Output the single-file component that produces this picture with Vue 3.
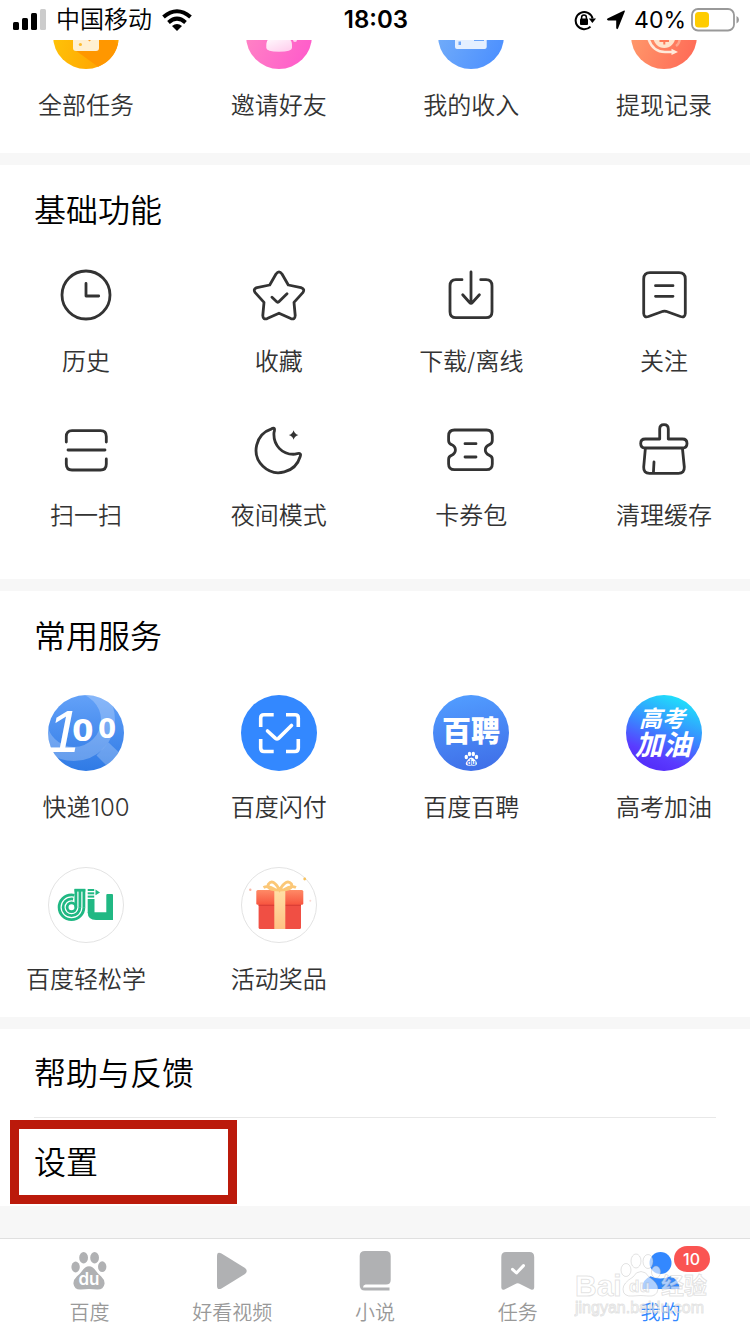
<script setup>
import { ref } from 'vue'

// Coin task shortcuts
const tasks = [
  { id: 'all', name: '全部任务' },
  { id: 'invite', name: '邀请好友' },
  { id: 'income', name: '我的收入' },
  { id: 'withdraw', name: '提现记录' }
]

// Line icons, 60x60
const basics = [
  {
    name: '历史',
    path: 'M30 6a24 24 0 1 0 0 48a24 24 0 1 0 0-48z M30 18.5V31H42.7'
  },
  {
    name: '收藏',
    path: 'M27 9Q30 4.8 33 9L39.3 20L52 22.6Q56.3 24 53.8 27.6L45 37.4L46.2 50.5Q46 55 41.8 53.6L30 48.2L18.2 53.6Q14 55 13.8 50.5L15 37.4L6.2 27.6Q3.7 24 8 22.6L20.7 20Z M23 32.3L28 37Q28.8 37.6 29.6 37L38 28.7'
  },
  {
    name: '下载/离线',
    path: 'M21 14.7H15Q9 14.7 9 21V46.7Q9 52.7 15 52.7H45Q51 52.7 51 46.7V21Q51 14.7 45 14.7H39.7 M30 7V38 M21.7 29.7L28.6 37.5Q30 39 31.4 37.5L38.4 29.7'
  },
  {
    name: '关注',
    path: 'M16 7.7H45Q51.3 7.7 51.3 14V48.5Q51 53 46.5 51.5L32 46.3Q30.5 45.8 29 46.3L14.5 51.5Q10 53 9.7 48.5V14Q9.7 7.7 16 7.7Z M21.5 20.7H39 M21.5 31.3H39'
  },
  {
    name: '扫一扫',
    path: 'M10.3 23V17.5Q10.3 11.7 16 11.7H44.5Q50.3 11.7 50.3 17.5V23 M12 31H49 M10.3 40V45Q10.3 51 16 51H44.5Q50.3 51 50.3 45V40'
  },
  {
    name: '夜间模式',
    path: 'M22.6 9.8C25.4 8 26.2 9.600 25 13.5C24 26 33 36 46 35.2C50.5 34 52.4 34 51.2 37.5A22.5 22.5 0 1 1 22.6 9.8Z',
    fill: 'M44.6 11.2Q45.6 15 49.4 16Q45.6 17 44.6 20.8Q43.6 17 39.8 16Q43.6 15 44.6 11.2Z'
  },
  {
    name: '卡券包',
    path: 'M13.5 11H45.5Q51.3 11 51.3 17V21.5Q51.3 24.5 48.5 25.6Q44.3 27.5 44.3 31Q44.3 34.5 48.5 36.4Q51.3 37.5 51.3 40.5V45Q51.3 50.7 45.5 50.7H13.5Q7.6 50.7 7.6 45V40.5Q7.6 37.5 10.4 36.4Q14.4 34.5 14.4 31Q14.4 27.5 10.4 25.6Q7.6 24.5 7.6 21.5V17Q7.6 11 13.5 11Z M24 24.7H35 M24 38H35'
  },
  {
    name: '清理缓存',
    path: 'M25.7 20V10Q25.7 5.7 30 5.7Q34.3 5.7 34.3 10V20H48.5Q53 20 53 24.5Q53 29 48.5 29H11.2Q6.7 29 6.7 24.5Q6.7 20 11.2 20Z M11.4 29L9.7 48Q9.4 54.3 15.5 54.3H44.5Q50.6 54.3 50.3 48L48.4 29 M20 43L19.4 54'
  }
]

const services = [
  { id: 'express', name: '快递100' },
  { id: 'pay', name: '百度闪付' },
  { id: 'job', name: '百度百聘' },
  { id: 'exam', name: '高考加油' },
  { id: 'study', name: '百度轻松学' },
  { id: 'gift', name: '活动奖品' }
]

const tabs = [
  { id: 'home', name: '百度' },
  { id: 'video', name: '好看视频' },
  { id: 'novel', name: '小说' },
  { id: 'task', name: '任务' },
  { id: 'mine', name: '我的', badge: 10 }
]

const activeTab = ref('mine')
</script>

<template>
  <div class="page">
    <header class="status-bar">
      <div class="status-left">
        <svg width="33" height="22" viewBox="0 0 33 22">
          <rect x="0" y="13" width="6" height="8" rx="1.5" />
          <rect x="9" y="9" width="6" height="12" rx="1.5" />
          <rect x="18" y="4" width="6" height="17" rx="1.5" />
          <rect x="27" y="0" width="6" height="21" rx="1.5" fill="#ccc" />
        </svg>
        <span>中国移动</span>
        <svg width="30" height="22" viewBox="0 0 30 22">
          <g fill="none" stroke="#000" stroke-width="4">
            <path d="M1.5 8Q15-3.5 28.5 8" />
            <path d="M6.5 13.4Q15 6 23.5 13.4" />
          </g>
          <path d="M10 17Q15 13 20 17L15 22Z" />
        </svg>
      </div>
      <time class="clock">18:03</time>
      <div class="status-right">
        <svg width="22" height="22" viewBox="0 0 22 22">
          <path d="M16.5 17.6A8.6 8.6 0 1 1 18.6 9.5" fill="none" stroke="#000" stroke-width="2" />
          <path d="M14.8 9.5H22L18.4 14Z" />
          <rect x="6" y="9.5" width="8" height="6.5" rx="1" />
          <path d="M7.6 10V8.4Q7.6 6 10 6Q12.4 6 12.4 8.4V10" fill="none" stroke="#000" stroke-width="1.5" />
        </svg>
        <svg class="locate" width="20" height="20" viewBox="0 0 20 20">
          <path d="M18.8 1.5L12 18.5Q10.8 20 10.2 18V10.500H2Q0 9.700 1.500 8.500L17.6 0.700Q19.300 0.200 18.8 1.5Z" />
        </svg>
        <span class="percent">40%</span>
        <svg class="battery" width="48" height="24" viewBox="0 0 48 24">
          <rect x="1" y="1" width="42" height="21.5" rx="6" fill="none" stroke="#999" stroke-width="1.8" />
          <rect x="4" y="4" width="14" height="15.5" rx="3.5" fill="#fc0" />
          <path d="M45.5 8Q48 9 48 11.7Q48 14.5 45.5 15.5Z" fill="#999" />
        </svg>
      </div>
    </header>

    <main>
      <section class="panel tasks">
        <div class="grid">
          <button v-for="t in tasks" :key="t.id" class="item">
            <svg v-if="t.id === 'all'" class="icon-task" viewBox="0 0 66 66">
              <defs>
                <linearGradient id="gOrange" x1="0" y1="0" x2="1" y2="0.3">
                  <stop offset="0" stop-color="#ffc80a" />
                  <stop offset="1" stop-color="#ffa200" />
                </linearGradient>
              </defs>
              <circle cx="33" cy="33" r="33" fill="url(#gOrange)" />
              <path d="M22 47L45 63.7A33 33 0 0 0 65 41L46 22Z" fill="#ff9700" />
              <rect x="20" y="16" width="26" height="32" rx="3" fill="#fff0d2" />
              <circle cx="27.4" cy="41.5" r="1.6" fill="#fdbb2d" />
              <path d="M35 37H38L36.5 38.5Z" fill="#fd9c20" />
            </svg>
            <svg v-else-if="t.id === 'invite'" class="icon-task" viewBox="0 0 66 66">
              <defs>
                <linearGradient id="gPink" x1="0" y1="0.3" x2="1" y2="0.8">
                  <stop offset="0" stop-color="#ff86c4" />
                  <stop offset="1" stop-color="#ff5acb" />
                </linearGradient>
                <linearGradient id="gPinkBody" x1="0" y1="0" x2="0.6" y2="1">
                  <stop offset="0" stop-color="#fff" />
                  <stop offset="1" stop-color="#ffd3ef" />
                </linearGradient>
              </defs>
              <circle cx="33" cy="33" r="33" fill="url(#gPink)" />
              <path d="M20.3 42Q20.3 33 33 33Q46 33 46 42V45Q46 48.7 33 48.7Q20.3 48.7 20.3 45Z" fill="url(#gPinkBody)" />
              <circle cx="49" cy="37" r="2" fill="#ffd3ef" />
            </svg>
            <svg v-else-if="t.id === 'income'" class="icon-task" viewBox="0 0 66 66">
              <defs>
                <linearGradient id="gSky" x1="0" y1="0.3" x2="1" y2="0.8">
                  <stop offset="0" stop-color="#74aef9" />
                  <stop offset="1" stop-color="#4b8fff" />
                </linearGradient>
              </defs>
              <circle cx="33" cy="33" r="33" fill="url(#gSky)" />
              <path d="M17 20H46V37H48.7V44Q48.7 46 46.5 46H19Q17 46 17 44Z" fill="#e4efff" />
              <path d="M20.5 38.5H23V42H20.5Z M36 37H46V38H36Z" fill="#6ba5fb" />
            </svg>
            <svg v-else class="icon-task" viewBox="0 0 66 66">
              <defs>
                <linearGradient id="gCoral" x1="0" y1="0.3" x2="1" y2="0.7">
                  <stop offset="0" stop-color="#ff9c6c" />
                  <stop offset="1" stop-color="#ff6b57" />
                </linearGradient>
              </defs>
              <circle cx="33" cy="33" r="33" fill="url(#gCoral)" />
              <circle cx="33.3" cy="34" r="11" fill="#ffe3cb" />
              <path d="M28.5 38H38M33.3 30V41.5" fill="none" stroke="#ff7a58" stroke-width="2" />
              <path d="M17.5 36Q22 49 34 49H41" fill="none" stroke="#ffe9da" stroke-width="2.4" />
              <path d="M40.5 45.8L47 49L40.5 52Z" fill="#ffe9da" />
              <path d="M49 36Q48 41 45 43" fill="none" stroke="#ffa68c" stroke-width="2.4" />
            </svg>
            <span class="label">{{ t.name }}</span>
          </button>
        </div>
      </section>

      <section class="panel basics">
        <h2>基础功能</h2>
        <div class="grid">
          <button v-for="b in basics" :key="b.name" class="item">
            <svg class="icon-line" viewBox="0 0 60 60">
              <path :d="b.path" />
              <path v-if="b.fill" class="solid" :d="b.fill" />
            </svg>
            <span class="label">{{ b.name }}</span>
          </button>
        </div>
      </section>

      <section class="panel services">
        <h2>常用服务</h2>
        <div class="grid">
          <button v-for="s in services" :key="s.id" class="item">
            <svg v-if="s.id === 'express'" class="icon-service" viewBox="0 0 76 76">
              <defs>
                <linearGradient id="gExpress" x1="0" y1="0" x2="0" y2="1">
                  <stop offset="0" stop-color="#63a1f8" />
                  <stop offset="1" stop-color="#2f7ae5" />
                </linearGradient>
                <clipPath id="cExpress"><circle cx="38" cy="38" r="38" /></clipPath>
              </defs>
              <g clip-path="url(#cExpress)">
                <rect width="76" height="76" fill="url(#gExpress)" />
                <circle cx="26" cy="25" r="34" fill="none" stroke="#fff" stroke-opacity="0.24" stroke-width="14" />
                <path d="M48.5 60.5L60.5 47.5L76 62L62 74Z" fill="#fff" fill-opacity="0.24" />
              </g>
              <text class="brush">
                <tspan class="one" x="-1" y="57">1</tspan><tspan x="24" y="46" font-size="31">0</tspan><tspan x="50" y="43" font-size="26">0</tspan>
              </text>
            </svg>
            <svg v-else-if="s.id === 'pay'" class="icon-service" viewBox="0 0 76 76">
              <circle cx="38" cy="38" r="38" fill="#3388ff" />
              <g fill="none" stroke="#fff" stroke-width="3.6">
                <path d="M32.7 19.8H23Q19.7 19.8 19.7 23V32M45 19.8H54Q57.3 19.8 57.3 23V32M19.7 44V53Q19.7 56.5 23 56.5H32.7M45 56.5H54Q57.3 56.5 57.3 53V44" />
                <path d="M26.5 36L34.5 43.4Q36 44.6 37.5 43.4L50.5 30.5" stroke-linecap="round" />
              </g>
            </svg>
            <svg v-else-if="s.id === 'job'" class="icon-service" viewBox="0 0 76 76">
              <defs>
                <linearGradient id="gJob" x1="0.4" y1="0" x2="0.6" y2="1">
                  <stop offset="0" stop-color="#519cff" />
                  <stop offset="1" stop-color="#3f6fe8" />
                </linearGradient>
              </defs>
              <circle cx="38" cy="38" r="38" fill="url(#gJob)" />
              <text class="job-text" x="38" y="47" text-anchor="middle">百聘</text>
              <g fill="#fff">
                <ellipse cx="33.3" cy="62" rx="1.7" ry="2.2" />
                <ellipse cx="36.5" cy="59" rx="1.7" ry="2.3" />
                <ellipse cx="40.3" cy="59" rx="1.7" ry="2.3" />
                <ellipse cx="43.5" cy="62" rx="1.7" ry="2.2" />
                <path d="M38.3 62.5Q40.5 62.5 42 65Q45 68 43.3 70Q42 71 38.3 70.6Q34.6 71 33.3 70Q31.8 68 34.800 65Q36.3 62.5 38.3 62.5Z" />
              </g>
              <text class="job-du" x="38.3" y="69.6" text-anchor="middle">du</text>
            </svg>
            <svg v-else-if="s.id === 'exam'" class="icon-service" viewBox="0 0 76 76">
              <defs>
                <linearGradient id="gExam" x1="0.75" y1="0.05" x2="0.4" y2="0.95">
                  <stop offset="0" stop-color="#1fe0fb" />
                  <stop offset="0.5" stop-color="#3a86ff" />
                  <stop offset="0.85" stop-color="#5a3bff" />
                  <stop offset="1" stop-color="#5530fa" />
                </linearGradient>
              </defs>
              <circle cx="38" cy="38" r="38" fill="url(#gExam)" />
              <g class="exam-text">
                <text x="13" y="32" font-size="23">高考</text>
                <text x="9" y="60" font-size="28">加油</text>
              </g>
            </svg>
            <svg v-else-if="s.id === 'study'" class="icon-service" viewBox="0 0 76 76">
              <circle cx="38" cy="38" r="37.5" fill="#fff" stroke="#e3e3e3" />
              <g fill="none" stroke="#20b883" stroke-width="2.8">
                <circle cx="23.5" cy="40.3" r="12.4" stroke-dasharray="61 20" />
                <circle cx="23.5" cy="40.3" r="8.4" stroke-dasharray="41 20" />
                <circle cx="23.5" cy="40.3" r="4.4" />
                <path d="M35.9 40.5V22M31.9 40.5V22M27.9 40.5V22" />
                <path d="M26.5 23.2H37.3" />
              </g>
              <g fill="#20b883">
                <rect x="39.7" y="22" width="6.5" height="2" />
                <rect x="39.7" y="25.3" width="6.5" height="2" />
                <rect x="39.7" y="28.6" width="6.5" height="2" />
                <path d="M47.5 22.5L52 25.4L47.5 28.3Z" />
                <rect x="39.7" y="32" width="6.8" height="14" />
                <rect x="58.3" y="27" width="6.7" height="22" rx="1" />
                <path d="M39.7 45.3H65V53H48Q39.7 53 39.7 45.3Z" />
              </g>
            </svg>
            <svg v-else class="icon-service" viewBox="0 0 76 76">
              <defs>
                <linearGradient id="gLid" x1="0" y1="0" x2="0" y2="1">
                  <stop offset="0" stop-color="#ff8a66" />
                  <stop offset="1" stop-color="#f7553f" />
                </linearGradient>
                <linearGradient id="gRibbon" x1="0" y1="0" x2="0" y2="1">
                  <stop offset="0" stop-color="#ffe0a6" />
                  <stop offset="1" stop-color="#ffc184" />
                </linearGradient>
              </defs>
              <circle cx="38" cy="38" r="37.5" fill="#fff" stroke="#e3e3e3" />
              <rect x="17.6" y="34" width="42.4" height="28" rx="1.5" fill="#f04f44" />
              <rect x="15.3" y="23" width="47" height="14.7" rx="1.5" fill="url(#gLid)" />
              <path d="M17.6 37.7H60V39H17.6Z" fill="#dc3f36" />
              <rect x="33.3" y="23" width="11" height="39" fill="url(#gRibbon)" />
              <g fill="none" stroke="#fbc777" stroke-width="2.8">
                <path d="M38.6 23Q24.5 23 27.500 17Q32 11 38.6 23Q45.500 11 50.500 17Q53 23 38.6 23Z" />
                <path d="M34 22.5Q27 18 22.5 20.500M43.5 22.5Q50 18 55 20.500" />
              </g>
              <circle cx="63.7" cy="12" r="1.4" fill="#f8c25c" />
              <circle cx="9.3" cy="22.7" r="1.2" fill="#f9b3a2" />
              <circle cx="69.3" cy="33.7" r="1" fill="#fbd6d0" />
            </svg>
            <span class="label">{{ s.name }}</span>
          </button>
        </div>
      </section>

      <section class="links">
        <a class="link-row" href="#feedback">帮助与反馈</a>
        <a class="link-row marked" href="#settings">设置</a>
      </section>
    </main>

    <nav class="tab-bar">
      <button
        v-for="t in tabs"
        :key="t.id"
        class="tab"
        :class="{ active: activeTab === t.id }"
        @click="activeTab = t.id"
      >
        <span class="tab-icon">
          <svg width="40" height="40" viewBox="0 0 40 40" fill="currentColor">
            <g v-if="t.id === 'home'">
              <ellipse cx="6.6" cy="16" rx="4.2" ry="5.4" />
              <ellipse cx="14.6" cy="6.7" rx="4.4" ry="5.7" />
              <ellipse cx="25.6" cy="6.7" rx="4.4" ry="5.7" />
              <ellipse cx="33.2" cy="15.7" rx="4.2" ry="5.4" />
              <path d="M20 15.2Q24 15.2 27 20Q29 22.8 32 25.3Q36 29 35.5 33Q34.5 38.8 28 38.5Q20 37.5 12 38.5Q5.5 39 4.5 33Q4 29 8 25.3Q11 22.8 13 20Q16 15.2 20 15.2Z" />
              <text class="du" x="20" y="34" text-anchor="middle">du</text>
            </g>
            <path v-else-if="t.id === 'video'" d="M5 5Q5 0 9.5 2.5L33 17Q36.5 20 33 23L9.5 37.5Q5 39.5 5 35Z" />
            <path v-else-if="t.id === 'novel'" d="M10 0H30.5Q35.7 0 35.7 5V29Q35.7 33.5 31 33.5H10.5Q8 34 8 36.5H34.5V39.5H10Q4.7 39.5 4.7 34V5Q4.7 0 10 0Z" />
            <g v-else-if="t.id === 'task'">
              <path d="M8 1H31.5Q36.2 1 36.2 6V36.5Q36 39.5 33 38.5L21 32.5Q19.7 32 18.4 32.5L6.5 38.5Q3.5 39.5 3.3 36.5V6Q3.3 1 8 1Z" />
              <path d="M14.5 18.3L18.5 22L25.5 14.6" fill="none" stroke="#fff" stroke-width="3" stroke-linecap="round" stroke-linejoin="round" />
            </g>
            <g v-else>
              <circle cx="19.5" cy="12" r="11" />
              <path d="M9.5 25.2Q19.5 30 29.5 25.2Q38.5 28.5 38.5 38H1Q1 28.5 9.5 25.2Z" />
            </g>
          </svg>
          <span v-if="t.badge" class="badge">{{ t.badge }}</span>
        </span>
        <span class="tab-name">{{ t.name }}</span>
      </button>

      <svg class="stamp" width="138" height="70" viewBox="0 0 138 70">
        <ellipse cx="52" cy="20" rx="5" ry="6.5" />
        <ellipse cx="62" cy="11" rx="5" ry="7" />
        <ellipse cx="74" cy="11.5" rx="5" ry="7" />
        <ellipse cx="82" cy="22" rx="4.5" ry="6" />
        <path d="M67 21.5Q72 21.5 75 27Q84 33 84 39Q83 47 74 46Q67 45 59 46Q49 47 49 39Q49 33 59 27Q62 21.5 67 21.5Z" />
        <text x="1" y="46" font-size="30">Bai</text>
        <text x="55" y="42" font-size="17">du</text>
        <text x="87" y="44" font-size="23">经验</text>
        <text class="stamp-url" x="1" y="63" font-size="16">jingyan.baidu.com</text>
      </svg>
    </nav>
  </div>
</template>

<style>
body {
  margin: 0;
  background: #f7f7f7;
}
</style>

<style scoped>
.page {
  display: flex;
  flex-direction: column;
  min-height: 100vh;
  font-family: Inter, "Noto Sans CJK SC", sans-serif;
  font-weight: 350;
  color: #333;
}

button {
  padding: 0;
  border: none;
  background: none;
  font: inherit;
  color: inherit;
  cursor: pointer;
}

svg {
  display: block;
}

.status-bar {
  position: sticky;
  top: 0;
  z-index: 2;
  display: grid;
  grid-template-columns: 1fr auto 1fr;
  align-items: center;
  height: 40px;
  padding: 0 11px 0 13px;
  background: #fff;
  color: #000;
  font-size: 24px;
  line-height: 32px;
}

.status-left,
.status-right {
  display: flex;
  align-items: center;
}

.status-left {
  gap: 10px;
}

.status-right {
  justify-content: flex-end;
}

.clock {
  font-weight: 600;
}

.percent {
  font-size: 23px;
  font-weight: 400;
}

.locate {
  margin: 0 8px 0 10px;
}

.battery {
  margin-left: 5px;
}

/* Panels */
.panel {
  padding: 23px 0 46px;
  margin-bottom: 12px;
  background: #fff;
}

/* scrolled partly under the status bar */
.tasks {
  margin-top: -37px;
  padding: 0 0 30px;
}

.services {
  padding-bottom: 20px;
}

h2 {
  margin: 0 0 31px;
  padding: 0 34px;
  font-size: 32px;
  line-height: 46px;
  font-weight: 350;
  color: #000;
}

.services h2 {
  margin-bottom: 35px;
}

.grid {
  display: grid;
  grid-template-columns: repeat(4, 120px);
  justify-content: space-between;
  row-gap: 40px;
  padding: 0 26px;
}

.services .grid {
  row-gap: 42px;
}

.item {
  display: flex;
  flex-direction: column;
  align-items: center;
  gap: 20px;
}

.label {
  font-size: 24px;
  line-height: 34px;
  white-space: nowrap;
}

.icon-task {
  width: 66px;
  height: 66px;
}

.icon-line {
  width: 60px;
  height: 60px;
  fill: none;
  stroke: #333;
  stroke-width: 2.8;
  stroke-linecap: round;
  stroke-linejoin: round;
}

.icon-line .solid {
  fill: #333;
  stroke: none;
}

.icon-service {
  width: 76px;
  height: 76px;
}

.brush {
  fill: #fff;
  font-family: "DejaVu Sans", sans-serif;
  font-weight: 700;
}

.brush .one {
  font-family: "Liberation Sans", sans-serif;
  font-size: 60px;
  font-style: italic;
  font-weight: 400;
}

.job-text {
  fill: #fff;
  font-size: 29px;
  font-weight: 900;
}

.job-du {
  fill: #4478ee;
  font-size: 7px;
  font-weight: 700;
}

.exam-text {
  fill: #fff;
  font-style: italic;
  font-weight: 700;
}

/* Link rows */
.links {
  background: #fff;
}

.link-row {
  position: relative;
  display: block;
  padding: 2px 34px 0;
  font-size: 32px;
  line-height: 86px;
  color: #000;
  text-decoration: none;
}

.link-row:first-child::after {
  content: "";
  display: block;
  height: 1px;
  background: #e8e8e8;
}

.marked::after {
  content: "";
  position: absolute;
  top: 2px;
  bottom: 2px;
  left: 10px;
  width: 227px;
  box-sizing: border-box;
  border: 9px solid #bb1a0b;
}

/* Bottom tabs */
.tab-bar {
  position: sticky;
  bottom: 0;
  display: flex;
  height: 83px;
  margin-top: auto;
  padding: 12px 18px 0;
  border-top: 1px solid #e0e0e0;
  background: #fff;
}

.tab {
  flex: 1;
  display: flex;
  flex-direction: column;
  align-items: center;
  gap: 10px;
  color: #b0b1b3;
}

.tab-name {
  font-size: 20px;
  line-height: 24px;
  color: #999;
}

.tab.active,
.tab.active .tab-name {
  color: #3388ff;
}

.tab-icon {
  position: relative;
}

.du {
  fill: #fff;
  font-size: 17px;
  font-weight: 600;
}

.badge {
  position: absolute;
  top: -5px;
  left: 33px;
  width: 36px;
  border-radius: 13px;
  background: #fa5452;
  color: #fff;
  font-size: 16px;
  line-height: 26px;
  font-weight: 500;
}

.stamp {
  position: absolute;
  right: 38px;
  bottom: 14px;
  fill: rgba(255, 255, 255, 0.6);
  stroke: rgba(160, 160, 160, 0.3);
  stroke-width: 1;
  font-family: "Liberation Sans", "Noto Sans CJK SC", sans-serif;
  font-weight: 700;
  pointer-events: none;
}

.stamp-url {
  font-weight: 400;
}
</style>
